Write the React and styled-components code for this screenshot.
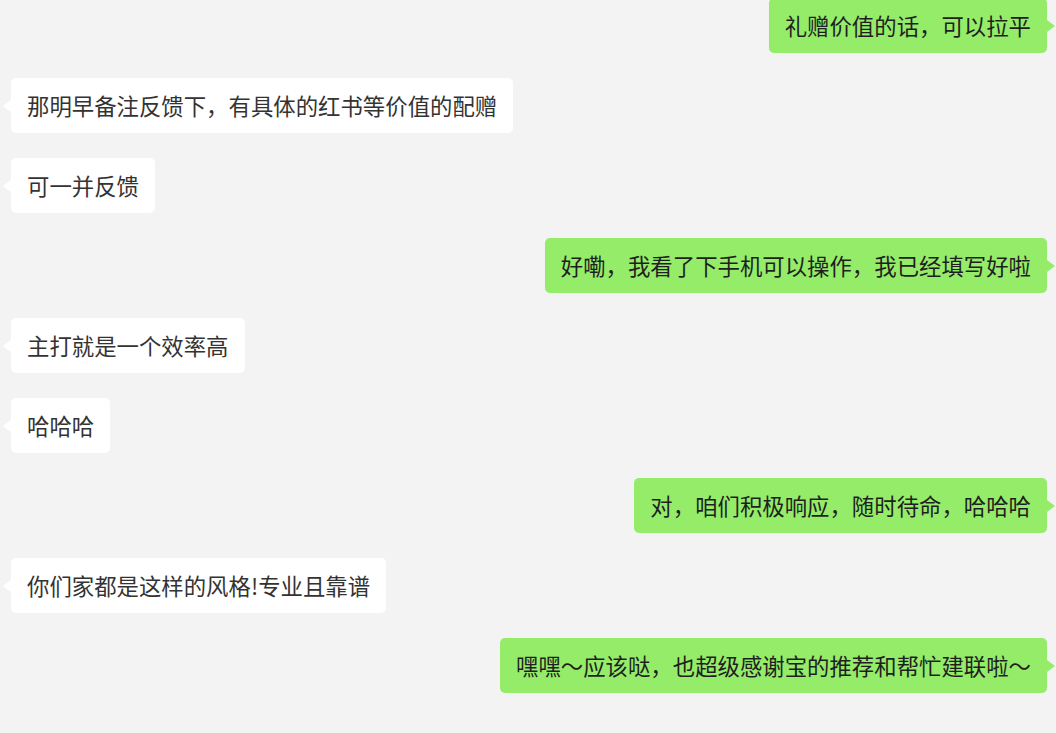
import React from 'react';
import styled, { createGlobalStyle } from 'styled-components';

const GlobalStyle = createGlobalStyle`
  html, body {
    margin: 0;
    padding: 0;
    background: #f3f3f3;
  }
  body {
    font-family: "Noto Sans CJK SC", "Noto Sans", sans-serif;
  }
`;

const Chat = styled.div`
  width: 1056px;
  height: 733px;
  overflow: hidden;
  background: #f3f3f3;
  box-sizing: border-box;
  padding: 0 9px 0 11px;
`;

const List = styled.div`
  display: flex;
  flex-direction: column;
  gap: 25px;
  margin-top: -2px;
`;

const Row = styled.div`
  display: flex;
  justify-content: ${p => (p.$mine ? 'flex-end' : 'flex-start')};
`;

const Bubble = styled.div`
  position: relative;
  box-sizing: border-box;
  height: 55px;
  padding: 0 16px;
  display: flex;
  align-items: center;
  border-radius: 5px;
  font-size: 22.4px;
  line-height: 1;
  white-space: nowrap;
  color: ${p => (p.$mine ? '#1f1f1f' : '#333333')};
  background: ${p => (p.$mine ? '#95ec69' : '#ffffff')};

  &::before {
    content: '';
    position: absolute;
    top: 50%;
    margin-top: -6px;
    border-style: solid;
    border-width: 6px 8px;
    border-color: transparent;
    ${p =>
      p.$mine
        ? `right: -16px; border-left-color: #95ec69;`
        : `left: -16px; border-right-color: #ffffff;`}
  }
`;

const messages = [
  { mine: true, text: '礼赠价值的话，可以拉平' },
  { mine: false, text: '那明早备注反馈下，有具体的红书等价值的配赠' },
  { mine: false, text: '可一并反馈' },
  { mine: true, text: '好嘞，我看了下手机可以操作，我已经填写好啦' },
  { mine: false, text: '主打就是一个效率高' },
  { mine: false, text: '哈哈哈' },
  { mine: true, text: '对，咱们积极响应，随时待命，哈哈哈' },
  { mine: false, text: '你们家都是这样的风格!专业且靠谱' },
  { mine: true, text: '嘿嘿～应该哒，也超级感谢宝的推荐和帮忙建联啦～' },
];

function App() {
  return (
    <>
      <GlobalStyle />
      <Chat>
        <List>
          {messages.map((m, i) => (
            <Row key={i} $mine={m.mine}>
              <Bubble $mine={m.mine}>{m.text}</Bubble>
            </Row>
          ))}
        </List>
      </Chat>
    </>
  );
}

export default App;
